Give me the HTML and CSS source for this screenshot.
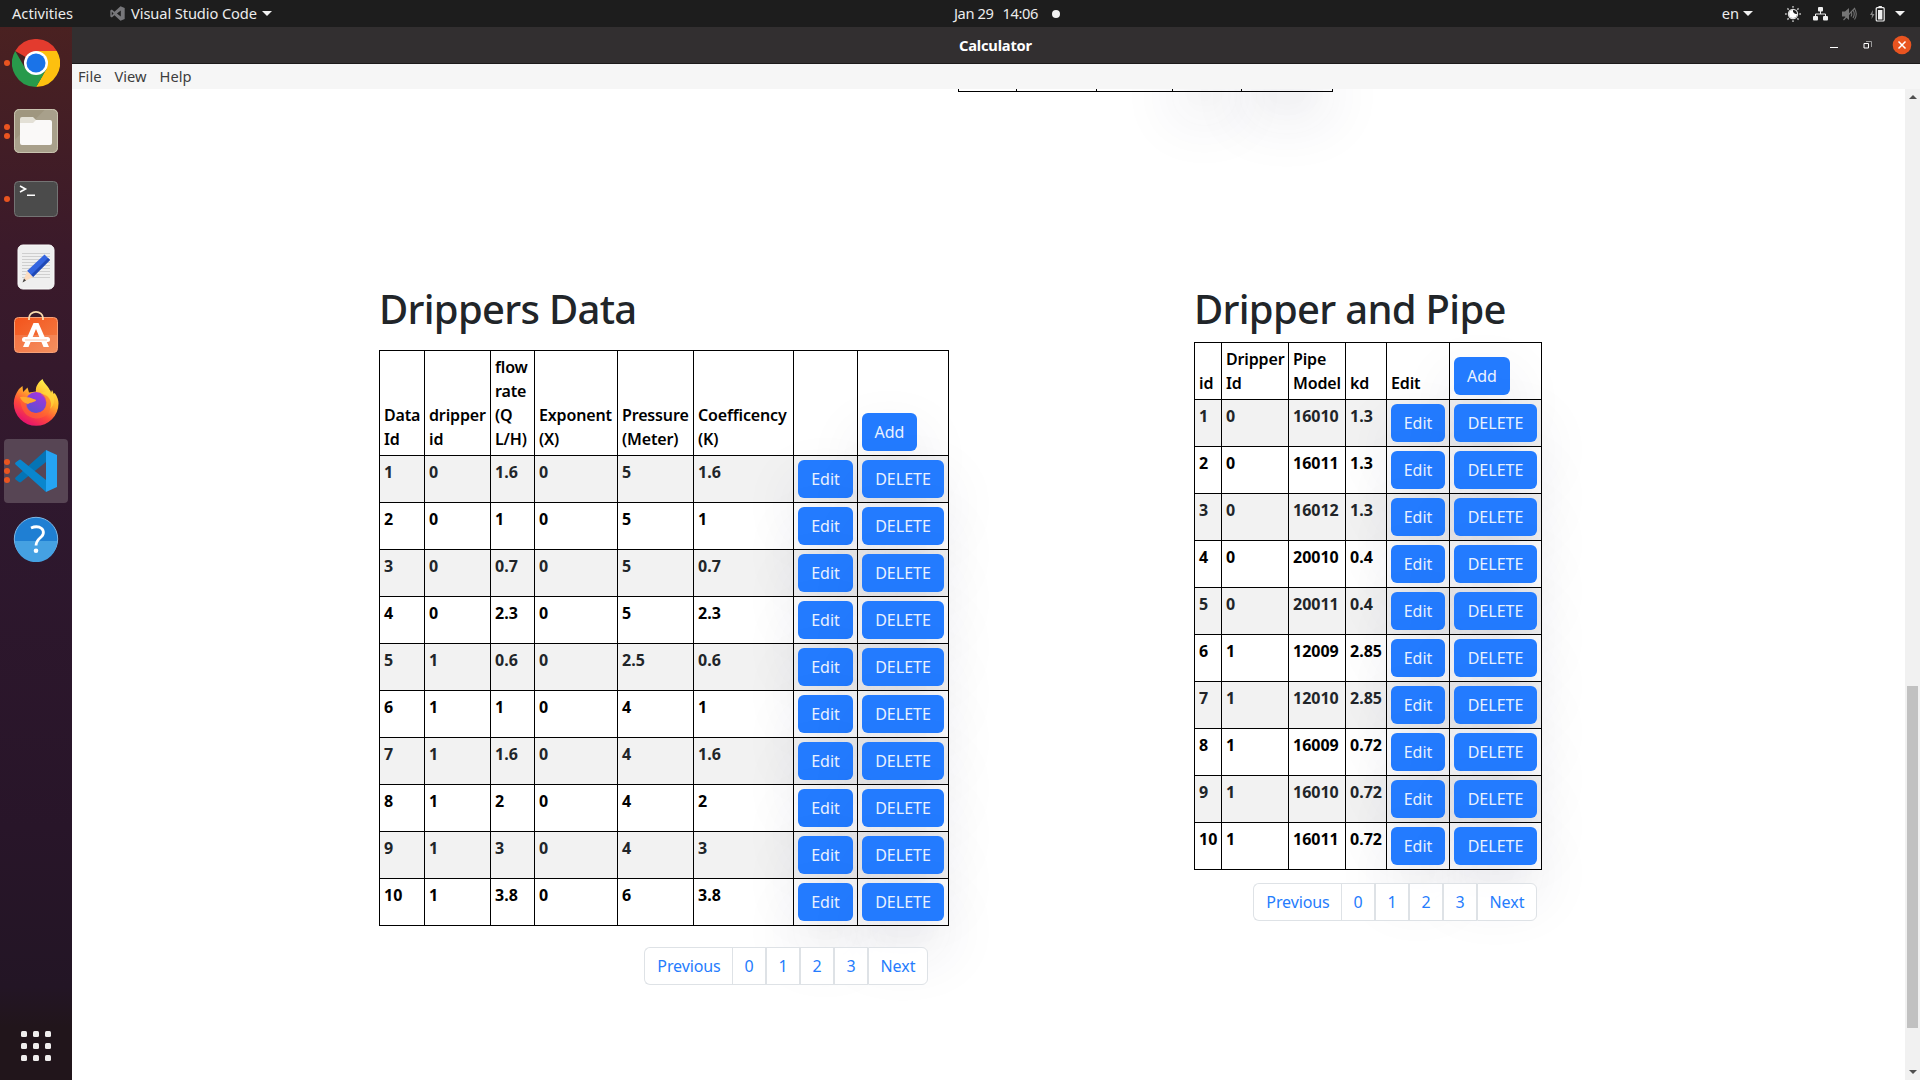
FILE: index.html
```html
<!DOCTYPE html>
<html lang="en">
<head>
<meta charset="utf-8">
<title>Calculator</title>
<link rel="stylesheet" href="styles.css">
</head>
<body>
<header class="topbar">
  <div class="topbar-left">
    <span class="activities">Activities</span>
    <svg class="app-icon" width="15" height="15" viewBox="0 0 100 100"><path fill="#77777a" d="M70 1 98 13V87L70 99 30 61 12 76 2 70V30L12 24 30 39ZM72 30 46 50 72 70ZM12 38V62L24 50Z" fill-rule="evenodd"/></svg>
    <span class="app-name">Visual Studio Code</span>
    <i class="caret"></i>
  </div>
  <div class="clock"><span>Jan 29</span><span>14:06</span><i class="dot"></i></div>
  <div class="topbar-right">
    <span class="lang">en</span><i class="caret"></i>
    <svg class="ic-light" width="16" height="16" viewBox="0 0 16 16"><circle cx="8" cy="8" r="4.6" fill="none" stroke="#ddd" stroke-width="1.2"/><path d="M8 4a4 4 0 1 0 4 4A3.4 3.4 0 0 1 8 4Z" fill="#fff"/><path d="M8 0v1.8M8 14.2V16M0 8h1.8M14.2 8H16M2.4 2.4l1.3 1.3M12.3 12.3l1.3 1.3M13.6 2.4l-1.3 1.3M3.7 12.3l-1.3 1.3" stroke="#bbb" stroke-width="1.5"/></svg>
    <svg class="ic-net" width="15" height="14" viewBox="0 0 15 14"><path d="M7.5 4v3M2.5 9V7h10v2" fill="none" stroke="#eee" stroke-width="1"/><rect x="5" width="5" height="4.5" rx="1" fill="#eee"/><rect y="9" width="5" height="4.5" rx="1" fill="#eee"/><rect x="10" y="9" width="5" height="4.5" rx="1" fill="#eee"/></svg>
    <svg class="ic-mute" width="15" height="14" viewBox="0 0 15 14"><path d="M0 4.5h3L7 1v12L3 9.500H0Z" fill="#757575"/><path d="M9 4.500q1.500 2.500 0 5M11 3q2.500 4 0 8M12.500 1.500q3.500 5.500 0 11M1.500 13 13 .8" fill="none" stroke="#757575" stroke-width="1.100"/></svg>
    <svg class="ic-batt" width="15" height="16" viewBox="0 0 15 16"><path d="M3 4 0 9h2l-.5 4L4.500 8h-2Z" fill="#888"/><rect x="6.200" y="1.700" width="8" height="13.300" rx="1" fill="none" stroke="#f0f0f0" stroke-width="1.200"/><path d="M8.500 0h3.400v1.500H8.500ZM8 4h4.400v9.500H8Z" fill="#f0f0f0"/></svg>
    <i class="caret"></i>
  </div>
</header>

<div class="desktop">
  <nav class="dock">
    <div class="app">
      <span class="run"><i></i></span>
      <svg width="48" height="48" viewBox="0 0 48 48"><path fill="#e33b2e" d="M24 24 3.200 12A24 24 0 0 1 44.800 12Z"/><path fill="#fdc00f" d="M24 12H44.800A24 24 0 0 1 24 48L34.400 30Z"/><path fill="#289a4b" d="M3.200 12 13.600 30 24 36H31L24 48A24 24 0 0 1 3.200 12Z"/><path fill="#289a4b" d="M24 48 34.400 30 24 30Z"/><circle cx="24" cy="24" r="12" fill="#fff"/><circle cx="24" cy="24" r="9.500" fill="#1a73e8"/></svg>
    </div>
    <div class="app">
      <span class="run"><i></i><i></i></span>
      <svg width="46" height="46" viewBox="0 0 46 46"><rect x="1" y="1" width="44" height="44" rx="5" fill="#9f967f"/><path d="M32 1.500H40a4.500 4.500 0 0 1 4.500 4.500V40a4.500 4.500 0 0 1-4.500 4.500H6A4.500 4.500 0 0 1 1.500 40V32Z" fill="#a8a08b"/><rect x="1.500" y="1.500" width="43" height="43" rx="5" fill="none" stroke="#c9c3b0"/><path d="M7 13V11a2 2 0 0 1 2-2H20l3 3V17H7Z" fill="#e3e0d6"/><path d="M7 15h13l3-3H37a2 2 0 0 1 2 2V35a2 2 0 0 1-2 2H9a2 2 0 0 1-2-2Z" fill="#faf9f8"/></svg>
    </div>
    <div class="app">
      <span class="run"><i></i></span>
      <svg width="46" height="38" viewBox="0 0 46 38"><rect x="1.500" y="1.500" width="43" height="35" rx="4" fill="#4b4b4b" stroke="#747474"/><path d="m7 6 5.500 3L7 12M14 15.200h8" fill="none" stroke="#fff" stroke-width="1.600"/></svg>
    </div>
    <div class="app">
      <svg width="38" height="46" viewBox="0 0 38 46"><rect x="1" y="1" width="36" height="44" rx="5" fill="#efefef" stroke="#fafafa"/><path d="M5 9.500h28M5 12.500h28M5 15.500h28M5 18.500h28M5 21.500h28M5 24.500h28M5 27.500h28M5 30.500h28M5 33.500h28" stroke="#cfcfcf"/><path d="M27.500 10.500 33 16 16 33l-6-6Z" fill="#3465e0"/><path d="m31 14 2 2-17 17-2-2Z" fill="#1f48b5"/><path d="m10 27 6 6-10 5Z" fill="#fbdcc0"/><path d="m7 34.500 2 2-3.500 2Z" fill="#444"/></svg>
    </div>
    <div class="app">
      <svg class="software" width="46" height="46" viewBox="0 0 46 46"><defs><linearGradient id="g-bag" x1="0" y1="0" x2="1" y2="1"><stop offset="0" stop-color="#f4531b"/><stop offset="1" stop-color="#f38048"/></linearGradient></defs><rect x="1.500" y="8.500" width="43" height="35" rx="4" fill="url(#g-bag)" stroke="#f7a077"/><path d="M2 26H44V39.500a3.500 3.500 0 0 1-3.500 3.500h-35A3.500 3.500 0 0 1 2 39.500Z" fill="#fff" opacity=".13"/><path d="M16 11V9a7 6.200 0 0 1 14 0v2" fill="none" stroke="#fbdcb0" stroke-width="1.800"/><path d="M20.500 14h5L36 38h-5.500L23 20l-7.500 18H10Z" fill="#fff"/><rect x="9" y="28" width="28" height="5" rx="2.500" fill="#fff"/><path d="M12 31h22" stroke="#fbc5a8"/></svg>
    </div>
    <div class="app">
      <svg class="firefox" width="46" height="48" viewBox="0 0 46 48"><defs><linearGradient id="g-fox" x1=".8" y1=".1" x2=".3" y2="1"><stop offset="0" stop-color="#fff04a"/><stop offset=".35" stop-color="#ffb02a"/><stop offset=".65" stop-color="#ff4b3a"/><stop offset="1" stop-color="#e30d72"/></linearGradient><linearGradient id="g-globe" x1=".8" y1="0" x2=".3" y2="1"><stop offset="0" stop-color="#a833e0"/><stop offset="1" stop-color="#5a50d0"/></linearGradient></defs><path fill="url(#g-fox)" d="M29.500 1C31 6 36 8 38 15l1-3c1 2 1.500 3 1.700 4l1-1C44.500 19 45.500 22 45.500 25.500A22.300 22.300 0 0 1 .8 25.500C.8 20 3 15 6 11l3.500-3 .6 6L14.500 9.500l1.500 5 7-1C22 9 25.500 4 29.500 1Z"/><circle cx="23" cy="24.500" r="10.500" fill="url(#g-globe)"/><path d="M7 20q8-1 16 1.500c1 2.500-8 3-9 5.500 0 5 5 8.500 10 8 6 0 9-5 9-10-.5-4-2-7-6-8.500 7-1 12 5 11 12s-7 12-14 12-16-4-17-20.500Z" fill="#ff6a30" opacity=".55"/><path d="M7 19q8-1 16 3c0 2-5 2-8 4-3-1-6-2-8-7Z" fill="#ffa92e"/><path d="M28 15c8 1 12 8 9 16 5-4 6-12 0-19Z" fill="#ffd83c" opacity=".6"/></svg>
    </div>
    <div class="app active">
      <span class="run"><i></i><i></i><i></i></span>
      <svg width="44" height="44" viewBox="0 0 44 44"><path d="M32 1 1.500 28.500a1.500 1.500 0 0 0 0 2L5 33a1.500 1.500 0 0 0 2 0L32 13Z" fill="#0574b5"/><path d="M32 43 1.500 15.500a1.500 1.500 0 0 1 0-2L5 11a1.500 1.500 0 0 1 2 0L32 31Z" fill="#0a86cd"/><path d="m32 1 11 5v32l-11 5Z" fill="#25a4f2"/></svg>
    </div>
    <div class="app">
      <svg width="46" height="46" viewBox="0 0 46 46"><circle cx="23" cy="23" r="21.700" fill="#1f7fd3" stroke="#7fb8e6"/><path d="M1.800 25H44.200A21.200 21.200 0 0 1 1.800 25Z" fill="#45a1e2"/><path d="M18 12q4.500-2 8.500-.8c4.500 1.800 5 6.300 2 9.300-3 2.800-5.500 4.500-5.500 9" fill="none" stroke="#fff" stroke-width="2.800"/><circle cx="23" cy="34.800" r="2.300" fill="#fff"/></svg>
    </div>
    <div class="all-apps"><i></i><i></i><i></i><i></i><i></i><i></i><i></i><i></i><i></i></div>
  </nav>

  <div class="window">
    <div class="titlebar">
      <span class="title">Calculator</span>
      <div class="controls">
        <i class="min"></i>
        <svg class="max" width="9" height="9" viewBox="0 0 9 9"><path d="M3 .5h5.500V6" fill="none" stroke="#999"/><path d="M1 2.500h4.500V7H1Z" fill="none" stroke="#fff"/></svg>
        <svg class="close" width="20" height="20" viewBox="0 0 20 20"><circle cx="10" cy="10" r="9.300" fill="#e95420"/><path d="m6.500 6.500 7 7M13.500 6.500l-7 7" stroke="#fff" stroke-width="1.500"/></svg>
      </div>
    </div>
    <div class="menubar"><span>File</span><span>View</span><span>Help</span></div>
    <div class="view">
      <main class="page">
        <table class="grid previous">
          <colgroup><col style="width:58px"><col style="width:80px"><col style="width:76px"><col style="width:69px"><col style="width:91px"></colgroup>
          <tr><td></td><td></td><td></td><td><span class="btn edit"></span></td><td><span class="btn delete"></span></td></tr>
        </table>
        <div class="sections">
          <section class="drippers">
            <h1>Drippers Data</h1>
            <table class="grid">
              <colgroup><col style="width:45px"><col style="width:66px"><col style="width:44px"><col style="width:83px"><col style="width:76px"><col style="width:100px"><col style="width:64px"><col style="width:91px"></colgroup>
              <thead><tr><th>Data Id</th><th>dripper id</th><th>flow rate (Q L/H)</th><th>Exponent (X)</th><th>Pressure (Meter)</th><th>Coefficency (K)</th><th></th><th><span class="btn add">Add</span></th></tr></thead>
              <tbody>
                <tr><td>1</td><td>0</td><td>1.6</td><td>0</td><td>5</td><td>1.6</td><td><span class="btn edit">Edit</span></td><td><span class="btn delete">DELETE</span></td></tr>
                <tr><td>2</td><td>0</td><td>1</td><td>0</td><td>5</td><td>1</td><td><span class="btn edit">Edit</span></td><td><span class="btn delete">DELETE</span></td></tr>
                <tr><td>3</td><td>0</td><td>0.7</td><td>0</td><td>5</td><td>0.7</td><td><span class="btn edit">Edit</span></td><td><span class="btn delete">DELETE</span></td></tr>
                <tr><td>4</td><td>0</td><td>2.3</td><td>0</td><td>5</td><td>2.3</td><td><span class="btn edit">Edit</span></td><td><span class="btn delete">DELETE</span></td></tr>
                <tr><td>5</td><td>1</td><td>0.6</td><td>0</td><td>2.5</td><td>0.6</td><td><span class="btn edit">Edit</span></td><td><span class="btn delete">DELETE</span></td></tr>
                <tr><td>6</td><td>1</td><td>1</td><td>0</td><td>4</td><td>1</td><td><span class="btn edit">Edit</span></td><td><span class="btn delete">DELETE</span></td></tr>
                <tr><td>7</td><td>1</td><td>1.6</td><td>0</td><td>4</td><td>1.6</td><td><span class="btn edit">Edit</span></td><td><span class="btn delete">DELETE</span></td></tr>
                <tr><td>8</td><td>1</td><td>2</td><td>0</td><td>4</td><td>2</td><td><span class="btn edit">Edit</span></td><td><span class="btn delete">DELETE</span></td></tr>
                <tr><td>9</td><td>1</td><td>3</td><td>0</td><td>4</td><td>3</td><td><span class="btn edit">Edit</span></td><td><span class="btn delete">DELETE</span></td></tr>
                <tr><td>10</td><td>1</td><td>3.8</td><td>0</td><td>6</td><td>3.8</td><td><span class="btn edit">Edit</span></td><td><span class="btn delete">DELETE</span></td></tr>
              </tbody>
            </table>
            <div class="pagination"><span class="prev">Previous</span><span>0</span><span>1</span><span>2</span><span>3</span><span class="next">Next</span></div>
          </section>
          <section class="pipes">
            <h1>Dripper and Pipe</h1>
            <table class="grid">
              <colgroup><col style="width:27px"><col style="width:67px"><col style="width:57px"><col style="width:41px"><col style="width:63px"><col style="width:92px"></colgroup>
              <thead><tr><th>id</th><th>Dripper Id</th><th>Pipe Model</th><th>kd</th><th>Edit</th><th><span class="btn add">Add</span></th></tr></thead>
              <tbody>
                <tr><td>1</td><td>0</td><td>16010</td><td>1.3</td><td><span class="btn edit">Edit</span></td><td><span class="btn delete">DELETE</span></td></tr>
                <tr><td>2</td><td>0</td><td>16011</td><td>1.3</td><td><span class="btn edit">Edit</span></td><td><span class="btn delete">DELETE</span></td></tr>
                <tr><td>3</td><td>0</td><td>16012</td><td>1.3</td><td><span class="btn edit">Edit</span></td><td><span class="btn delete">DELETE</span></td></tr>
                <tr><td>4</td><td>0</td><td>20010</td><td>0.4</td><td><span class="btn edit">Edit</span></td><td><span class="btn delete">DELETE</span></td></tr>
                <tr><td>5</td><td>0</td><td>20011</td><td>0.4</td><td><span class="btn edit">Edit</span></td><td><span class="btn delete">DELETE</span></td></tr>
                <tr><td>6</td><td>1</td><td>12009</td><td>2.85</td><td><span class="btn edit">Edit</span></td><td><span class="btn delete">DELETE</span></td></tr>
                <tr><td>7</td><td>1</td><td>12010</td><td>2.85</td><td><span class="btn edit">Edit</span></td><td><span class="btn delete">DELETE</span></td></tr>
                <tr><td>8</td><td>1</td><td>16009</td><td>0.72</td><td><span class="btn edit">Edit</span></td><td><span class="btn delete">DELETE</span></td></tr>
                <tr><td>9</td><td>1</td><td>16010</td><td>0.72</td><td><span class="btn edit">Edit</span></td><td><span class="btn delete">DELETE</span></td></tr>
                <tr><td>10</td><td>1</td><td>16011</td><td>0.72</td><td><span class="btn edit">Edit</span></td><td><span class="btn delete">DELETE</span></td></tr>
              </tbody>
            </table>
            <div class="pagination"><span class="prev">Previous</span><span>0</span><span>1</span><span>2</span><span>3</span><span class="next">Next</span></div>
          </section>
        </div>
      </main>
      <div class="scrollbar"><i class="up"></i><i class="thumb"></i><i class="down"></i></div>
    </div>
  </div>
</div>
</body>
</html>
```
FILE: styles.css
```css
* { box-sizing: border-box; }
body {
  margin: 0;
  width: 1920px;
  height: 1080px;
  overflow: hidden;
  display: flex;
  flex-direction: column;
  font: 16px/24px "Noto Sans", sans-serif;
  background: #fff;
}
i { display: block; font-style: normal; }
svg { display: block; flex: none; }

/* Top bar */
.topbar {
  height: 27px;
  flex: none;
  display: grid;
  grid-template-columns: 954px 1fr auto;
  align-items: center;
  background: #1d1d1d;
  color: #ececec;
  font-size: 14.67px;
  line-height: 27px;
}
.topbar-left, .topbar-right, .clock { display: flex; align-items: center; }
.activities { margin-left: 12px; width: 98px; }
.app-name { margin: 0 5px 0 6px; letter-spacing: -.1px; }
.caret {
  border: 5px solid transparent;
  border-top-color: #f2f2f2;
  border-bottom: 0;
}
.clock { gap: 9px; letter-spacing: -.4px; }
.dot { width: 8px; height: 8px; border-radius: 50%; background: #f2f2f2; margin-left: 5px; }
.topbar-right { padding-right: 15px; }
.lang { margin-right: 4px; }
.ic-light { margin-left: 32px; }
.ic-net { margin-left: 12px; }
.ic-mute { margin-left: 14px; }
.ic-batt { margin: 0 10px 0 13px; }

/* Dock */
.desktop { flex: 1; display: flex; min-height: 0; }
.dock {
  width: 72px;
  flex: none;
  padding: 4px 4px 19px;
  display: flex;
  flex-direction: column;
  gap: 4px;
  background: linear-gradient(#4a2121 0, #3b1a2a 220px, #2f182e 460px, #281529 800px, #231525 960px, #21151b 1000px);
}
.app {
  height: 64px;
  border-radius: 4px;
  display: grid;
  grid-template: 1fr / 1fr;
  align-items: center;
  justify-items: center;
}
.app > * { grid-area: 1 / 1; }
.active { background: #574554; }
.software { margin-top: -6px; }
.firefox { margin-top: -2px; }
.run { justify-self: start; display: flex; flex-direction: column; gap: 3px; }
.run i { width: 6px; height: 6px; border-radius: 50%; background: #e95420; }
.all-apps {
  margin: auto auto 0;
  display: grid;
  grid-template-columns: repeat(3, 6px);
  gap: 6px;
}
.all-apps i { height: 6px; border-radius: 1.5px; background: #f0eeee; }

/* Window */
.window { flex: 1; min-width: 0; display: flex; flex-direction: column; }
.titlebar {
  height: 37px;
  display: grid;
  grid-template-columns: 887px 1fr auto;
  align-items: center;
  background: #322f30;
  border-bottom: 1px solid #1c1a1a;
  color: #fff;
}
.title { grid-column: 2; font-size: 14.67px; font-weight: 700; letter-spacing: -.2px; }
.controls { display: flex; align-items: center; padding-right: 8px; }
.min { width: 8px; height: 1px; background: #fff; margin: 5px 25px 0 0; }
.max { margin-right: 20px; }
.menubar {
  height: 25px;
  padding-left: 6px;
  display: flex;
  gap: 13px;
  background: #f6f6f6;
  color: #3d3d3d;
  font-size: 14.67px;
  line-height: 25px;
}
.view { flex: 1; min-height: 0; display: flex; }
.page { flex: 1; overflow: hidden; }
.scrollbar {
  width: 15px;
  display: flex;
  flex-direction: column;
  align-items: center;
  background: #f1f1f1;
}
.up { margin-top: 6px; border: 4px solid transparent; border-top: 0; border-bottom-color: #505050; }
.down { margin: auto 0 6px; border: 4px solid transparent; border-bottom: 0; border-top-color: #505050; }
.thumb { width: 11px; height: 342px; margin-top: 587px; background: #c1c1c1; }

/* Page content */
.sections { display: flex; gap: 245px; padding-left: 307px; margin-top: 193px; }
.drippers { width: 570px; }
.pipes { width: 348px; }
h1 {
  margin: 0 0 9px;
  font-size: 40px;
  line-height: 48px;
  font-weight: 500;
  letter-spacing: -.7px;
  color: #212529;
}
.drippers h1 { margin-bottom: 17px; }
.grid { border-collapse: collapse; table-layout: fixed; width: 100%; }
.previous { width: 375px; margin: -45px 0 0 886px; }
th, td {
  border: 1px solid #000;
  padding: 4px;
  text-align: left;
  vertical-align: top;
  font-weight: 700;
  color: #000;
}
th { vertical-align: bottom; font-weight: 650; letter-spacing: -.15px; }
tbody tr:nth-child(odd) td { background: #f2f2f2; color: #212529; }
.previous tr:nth-child(odd) td { background: none; }
.btn {
  display: inline-block;
  vertical-align: top;
  height: 38px;
  border-radius: 6px;
  background: #237bff;
  color: #eaf2ff;
  font-weight: 400;
  letter-spacing: 0;
  line-height: 38px;
  text-align: center;
  box-shadow: rgba(45, 45, 80, .12) 0 27px 62px 0, rgba(0, 0, 0, .3) 0 18px 36px -18px;
}
.edit, .add { width: 55px; }
.delete { width: 82px; }
.pipes .edit { width: 54px; }
.pipes .add { width: 56px; }
.pipes .delete { width: 83px; }

.pagination { display: flex; justify-content: flex-end; margin: 21px 21px 0 0; }
.pipes .pagination { margin: 13px 5px 0 0; }
.pagination span {
  position: relative;
  width: 34px;
  height: 38px;
  border: 1px solid #dee2e6;
  background: rgba(255, 255, 255, .9);
  color: #257cfd;
  line-height: 36px;
  text-align: center;
}
.pagination .prev { width: 88px; border-right: 0; padding-left: 1px; letter-spacing: -.1px; border-radius: 6px 0 0 6px; }
.pagination .next { width: 60px; border-radius: 0 6px 6px 0; }
```
